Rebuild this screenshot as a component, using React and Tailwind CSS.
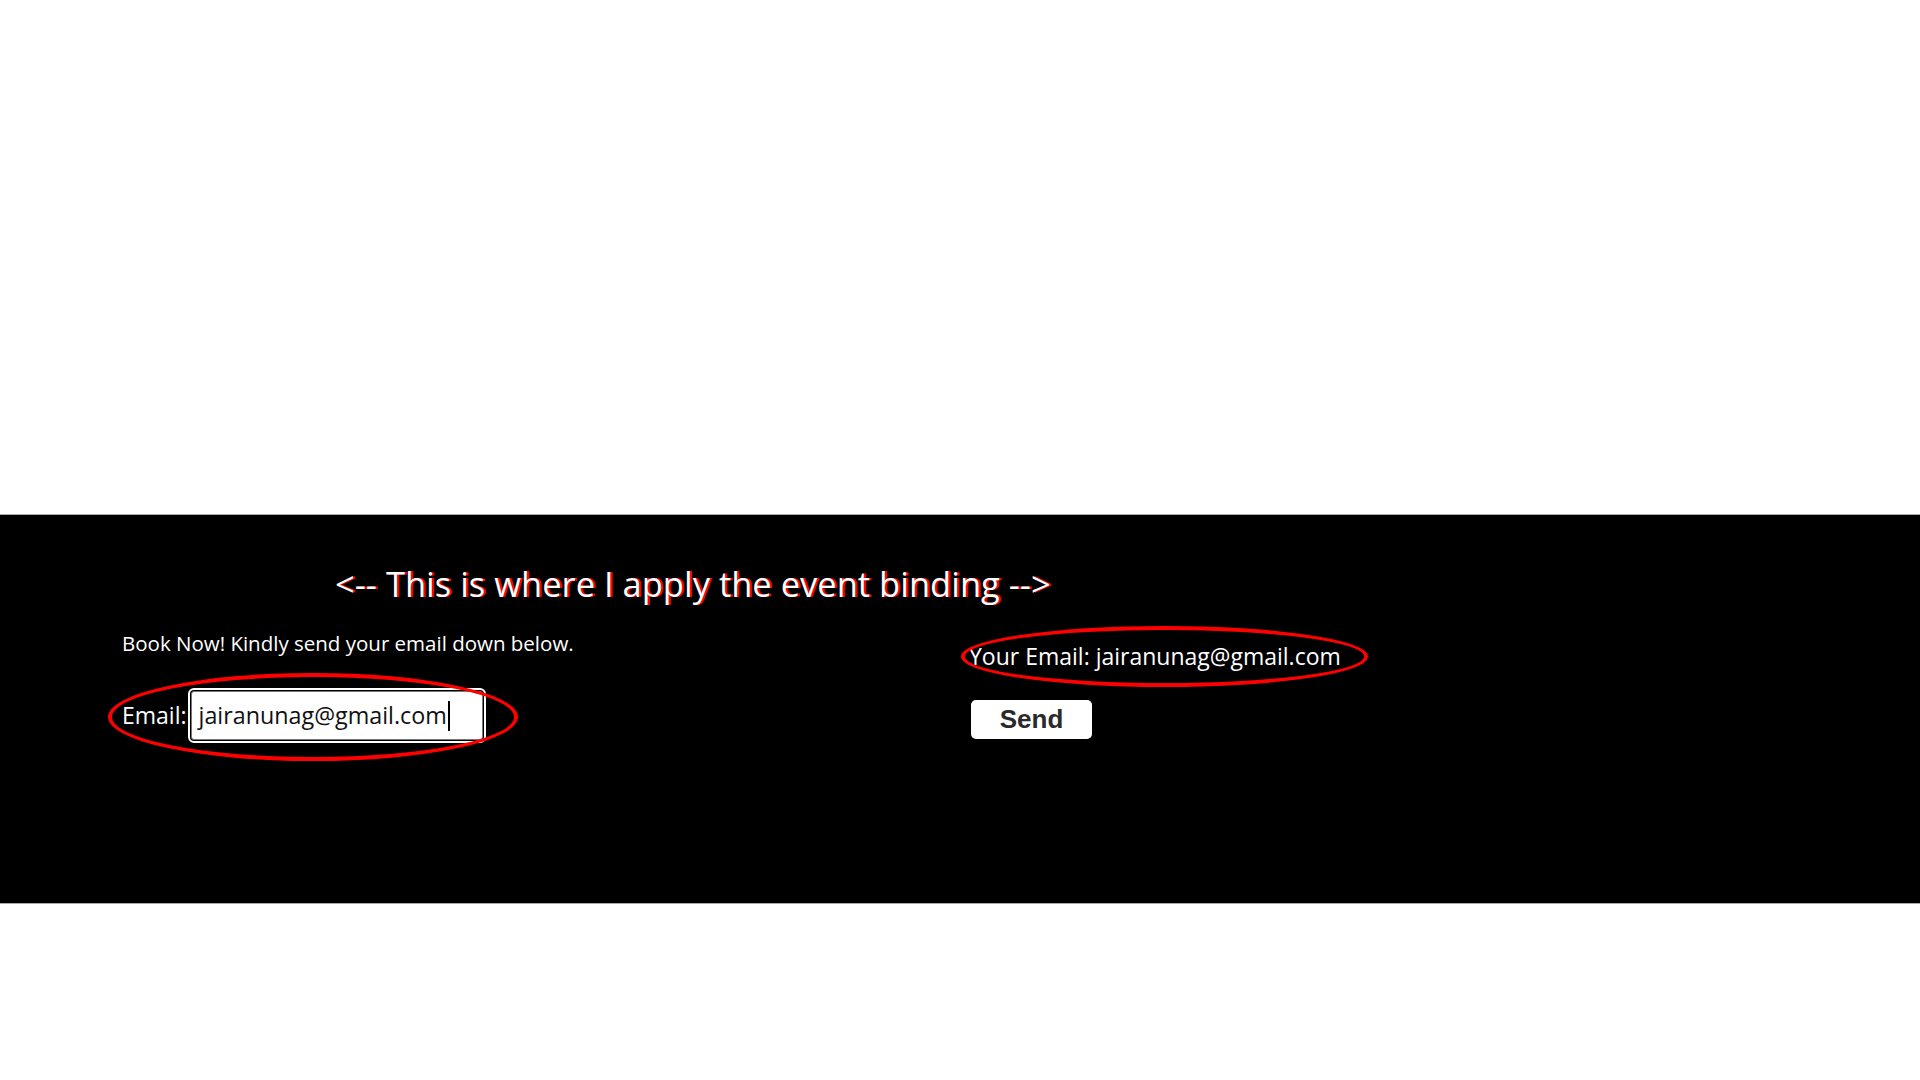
import React, { useState } from "react";

export default function App() {
  const [email] = useState("jairanunag@gmail.com");

  return (
    <div className="h-[1080px] pt-[514px] bg-white font-['Open_Sans',sans-serif] overflow-hidden">
      {/* Black band */}
      <div className="h-[390px] bg-black border-y border-[#a8a8a8] text-white">
        {/* Heading */}
        <h1 className="pt-[52px] pl-[335px] text-[34.5px] leading-none text-white [text-shadow:2px_0_#ff0000]">
          {"<-- This is where I apply the event binding -->"}
        </h1>

        <div className="flex mt-[31px]">
          {/* Left column */}
          <div className="w-[969px] pl-[122px]">
            <p className="text-[20.5px] leading-none">
              Book Now! Kindly send your email down below.
            </p>

            <div className="relative inline-flex items-center gap-[4px] mt-[38px]">
              <span className="text-[23px] leading-none">Email:</span>
              <div className="w-[292px] h-[49px] rounded-[3px] bg-white border border-[#767676] outline-2 outline-white outline-offset-1 flex items-center px-[7px] text-[23.3px] text-[#111] leading-none">
                {email}
                <span className="inline-block w-[2px] h-[30px] bg-black ml-[1px]" />
              </div>
              {/* annotation */}
              <span className="absolute -left-[14px] -right-[35px] -top-[18px] -bottom-[21px] rounded-[50%] border-[4px] border-[#ff0000] pointer-events-none" />
            </div>
          </div>

          {/* Right column */}
          <div className="flex flex-col items-start">
            <div className="relative mt-[12px]">
              <p className="text-[23px] leading-none">Your Email: {email}</p>
              <span className="absolute -left-[8px] -right-[27px] -top-[19px] -bottom-[19px] rounded-[50%] border-[4px] border-[#ff0000] pointer-events-none" />
            </div>
            <button className="mt-[32px] ml-[2px] w-[121px] h-[39px] bg-white rounded-[5px] font-['Liberation_Sans',sans-serif] font-bold text-[26px] text-[#2a2a2a] leading-none">
              Send
            </button>
          </div>
        </div>
      </div>
    </div>
  );
}
